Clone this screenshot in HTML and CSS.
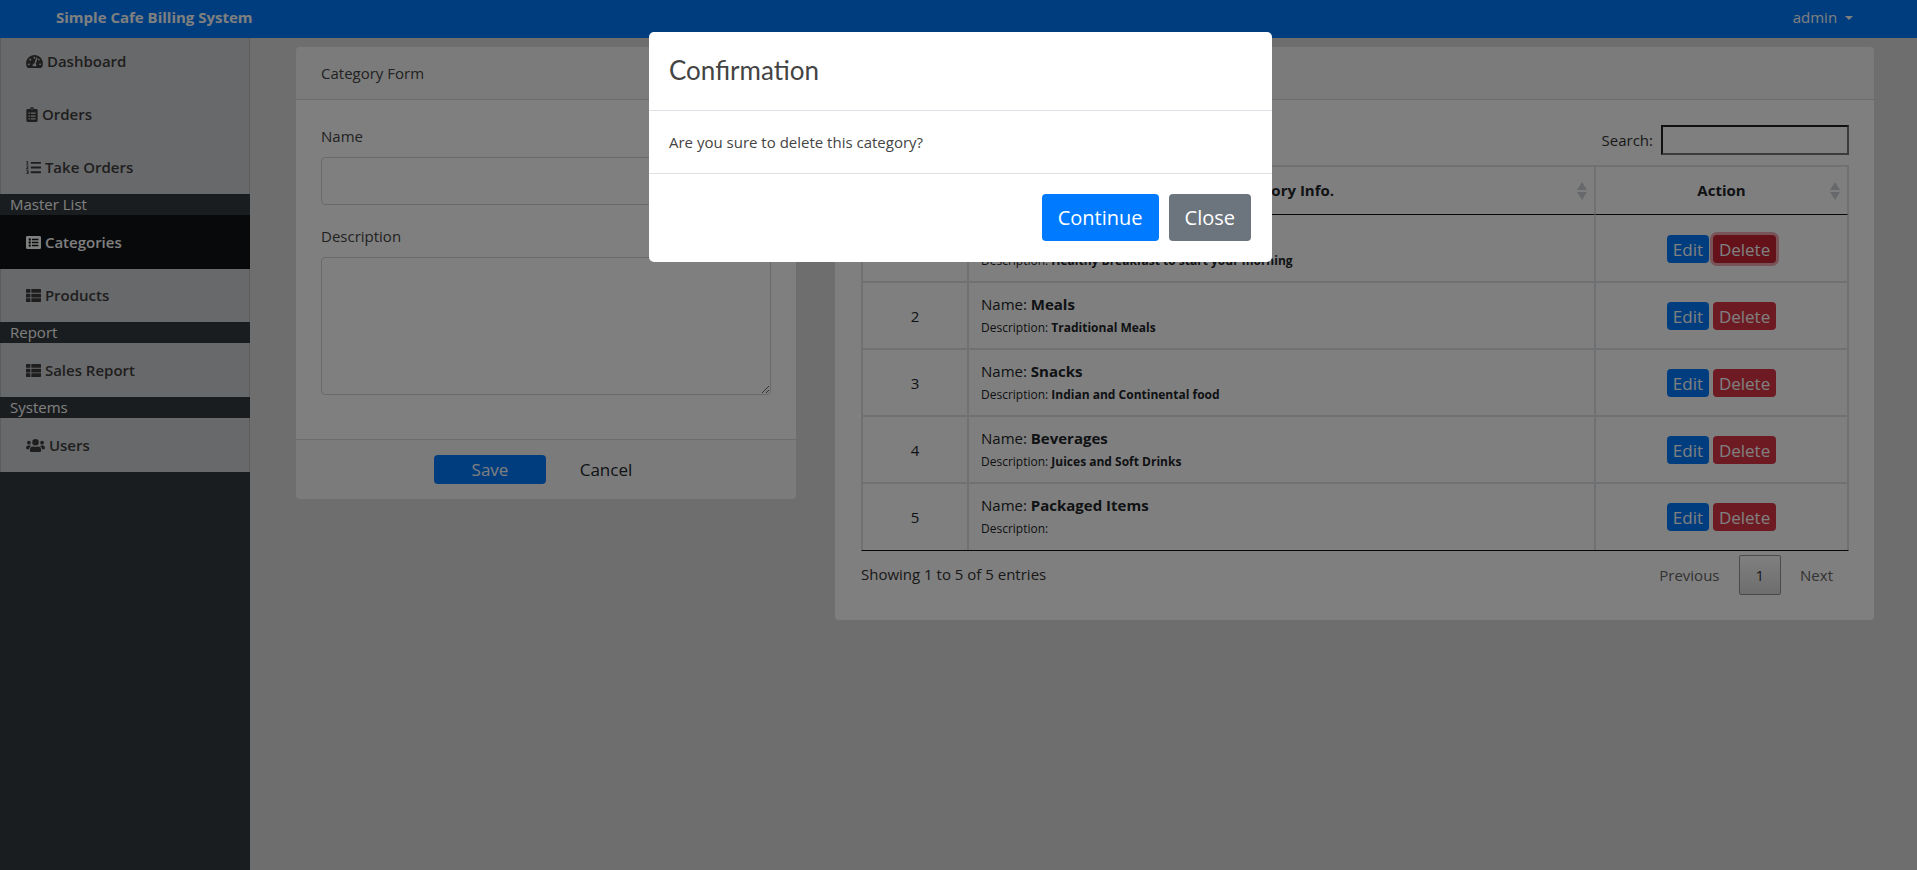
FILE: index.html
```html
<!DOCTYPE html>
<html lang="en">
<head>
<meta charset="utf-8">
<meta name="viewport" content="width=device-width, initial-scale=1">
<title>Simple Cafe Billing System</title>
<link rel="stylesheet" href="styles.css">
</head>
<body>
<header class="topbar">
  <strong class="brand">Simple Cafe Billing System</strong>
  <a class="account" href="#">admin <span class="caret"></span></a>
</header>

<div class="layout">
  <nav class="sidebar">
    <a class="nav-item" href="#"><svg class="icon" viewBox="0 0 576 512" width="17" height="15"><path d="M288 32C128.94 32 0 160.94 0 320c0 52.8 14.25 102.26 39.06 144.8 5.61 9.62 16.3 15.2 27.44 15.2h443c11.14 0 21.83-5.58 27.44-15.2C561.75 422.26 576 372.8 576 320c0-159.06-128.94-288-288-288zm0 64c14.71 0 26.58 10.13 30.32 23.65-1.11 2.26-2.64 4.23-3.45 6.67l-9.22 27.67c-5.13 3.49-10.97 6.01-17.64 6.01-17.67 0-32-14.33-32-32S270.33 96 288 96zM96 384c-17.67 0-32-14.33-32-32s14.33-32 32-32 32 14.33 32 32-14.33 32-32 32zm48-160c-17.67 0-32-14.33-32-32s14.33-32 32-32 32 14.33 32 32-14.33 32-32 32zm246.77-72.41l-61.33 184C343.13 347.33 352 364.54 352 384c0 11.72-3.38 22.55-8.88 32H232.88c-5.5-9.45-8.88-20.28-8.88-32 0-33.94 26.5-61.43 59.9-63.59l61.34-184.01c4.17-12.56 17.73-19.45 30.36-15.17 12.57 4.19 19.35 17.79 15.17 30.36zm14.66 57.2l15.52-46.55c3.47-1.29 7.13-2.23 11.05-2.23 17.67 0 32 14.33 32 32s-14.33 32-32 32c-11.38-.01-20.89-6.28-26.57-15.22zM480 384c-17.67 0-32-14.33-32-32s14.33-32 32-32 32 14.33 32 32-14.33 32-32 32z"/></svg> Dashboard</a>
    <a class="nav-item" href="#"><svg class="icon" viewBox="0 0 384 512" width="12" height="15"><path fill-rule="evenodd" d="M48 64h80a64 64 0 0 1 128 0h80a48 48 0 0 1 48 48v352a48 48 0 0 1-48 48H48a48 48 0 0 1-48-48V112a48 48 0 0 1 48-48zM72 190v44h48v-44zm80 0v44h160v-44zM72 286v44h48v-44zm80 0v44h160v-44zM72 382v44h48v-44zm80 0v44h160v-44zM192 40a24 24 0 1 0 0 48 24 24 0 0 0 0-48z"/></svg> Orders</a>
    <a class="nav-item" href="#"><svg class="icon" viewBox="0 0 512 512" width="15" height="15"><path d="M176 64h320a16 16 0 0 1 16 16v32a16 16 0 0 1-16 16H176a16 16 0 0 1-16-16V80a16 16 0 0 1 16-16zm0 160h320a16 16 0 0 1 16 16v32a16 16 0 0 1-16 16H176a16 16 0 0 1-16-16v-32a16 16 0 0 1 16-16zm0 160h320a16 16 0 0 1 16 16v32a16 16 0 0 1-16 16H176a16 16 0 0 1-16-16v-32a16 16 0 0 1 16-16zM28 32h36v96h24v24H8v-24h24V64H16V44zM8 188h72v64l-40 36h48v24H4v-32l46-44v-22H8zM8 352h80v120a8 8 0 0 1-8 8H8v-26h44v-26H24v-24h28v-26H8z"/></svg> Take Orders</a>
    <div class="nav-heading">Master List</div>
    <a class="nav-item active" href="#" aria-current="page"><svg class="icon" viewBox="0 0 512 512" width="15" height="15"><path fill-rule="evenodd" d="M48 32h416a48 48 0 0 1 48 48v352a48 48 0 0 1-48 48H48a48 48 0 0 1-48-48V80a48 48 0 0 1 48-48zM128 112a40 40 0 1 0 0 80 40 40 0 0 0 0-80zm0 104a40 40 0 1 0 0 80 40 40 0 0 0 0-80zm0 104a40 40 0 1 0 0 80 40 40 0 0 0 0-80zM204 124v56h220v-56zm0 104v56h220v-56zm0 104v56h220v-56z"/></svg> Categories</a>
    <a class="nav-item" href="#"><svg class="icon" viewBox="0 0 512 512" width="15" height="15"><path d="M24 32h126v128H0V56a24 24 0 0 1 24-24zm158 0h306a24 24 0 0 1 24 24v104H182zM0 192h150v128H0zm182 0h330v128H182zM0 352h150v128H24a24 24 0 0 1-24-24zm182 0h330v104a24 24 0 0 1-24 24H182z"/></svg> Products</a>
    <div class="nav-heading">Report</div>
    <a class="nav-item" href="#"><svg class="icon" viewBox="0 0 512 512" width="15" height="15"><path d="M24 32h126v128H0V56a24 24 0 0 1 24-24zm158 0h306a24 24 0 0 1 24 24v104H182zM0 192h150v128H0zm182 0h330v128H182zM0 352h150v128H24a24 24 0 0 1-24-24zm182 0h330v104a24 24 0 0 1-24 24H182z"/></svg> Sales Report</a>
    <div class="nav-heading">Systems</div>
    <a class="nav-item" href="#"><svg class="icon" viewBox="0 0 640 512" width="19" height="15"><path d="M96 224a64 64 0 1 0 0-128 64 64 0 0 0 0 128zm448 0a64 64 0 1 0 0-128 64 64 0 0 0 0 128zm32 32h-64c-17.600 0-33.500 7.100-45.100 18.600 40.300 22.100 68.900 62 75.100 109.400h66a32 32 0 0 0 32-32v-32a64 64 0 0 0-64-64zm-256 0a112 112 0 1 0 0-224 112 112 0 0 0 0 224zm76.800 32h-8.300a155 155 0 0 1-137 0h-8.300A115 115 0 0 0 128 403.200V432a48 48 0 0 0 48 48h288a48 48 0 0 0 48-48v-28.800A115 115 0 0 0 396.800 288zm-223.700-13.400A64 64 0 0 0 128 256H64a64 64 0 0 0-64 64v32a32 32 0 0 0 32 32h65.900c6.300-47.400 34.900-87.300 75.200-109.400z"/></svg> Users</a>
  </nav>

  <main class="content">
    <form class="card">
      <div class="card-header">Category Form</div>
      <div class="form-body">
        <div class="field">
          <label for="name">Name</label>
          <input class="control" id="name" type="text">
        </div>
        <div class="field">
          <label for="description">Description</label>
          <textarea class="control area" id="description"></textarea>
        </div>
      </div>
      <div class="card-footer">
        <button class="btn btn-sm btn-primary save" type="button">Save</button>
        <button class="btn btn-sm cancel" type="button">Cancel</button>
      </div>
    </form>

    <section class="card">
      <div class="card-header">Category List</div>
      <div class="list-body">
        <div class="search"><label for="search">Search:</label><input class="search-input" id="search" type="search"></div>
        <table class="data">
          <colgroup><col class="col-num"><col><col class="col-action"></colgroup>
          <thead>
            <tr>
              <th>#<svg class="sort" viewBox="0 0 10 18" width="10" height="18"><path d="M5 0l5 8H0zM0 10h10l-5 8z"/></svg></th>
              <th>Category Info.<svg class="sort" viewBox="0 0 10 18" width="10" height="18"><path d="M5 0l5 8H0zM0 10h10l-5 8z"/></svg></th>
              <th>Action<svg class="sort" viewBox="0 0 10 18" width="10" height="18"><path d="M5 0l5 8H0zM0 10h10l-5 8z"/></svg></th>
            </tr>
          </thead>
          <tbody>
            <tr>
              <td class="center">1</td>
              <td><p>Name: <b>Breakfast</b></p><p class="small">Description: <b>Healthy Breakfast to start your morning</b></p></td>
              <td class="center"><button class="btn btn-row btn-primary" type="button">Edit</button> <button class="btn btn-row btn-danger pressed" type="button">Delete</button></td>
            </tr>
            <tr>
              <td class="center">2</td>
              <td><p>Name: <b>Meals</b></p><p class="small">Description: <b>Traditional Meals</b></p></td>
              <td class="center"><button class="btn btn-row btn-primary" type="button">Edit</button> <button class="btn btn-row btn-danger" type="button">Delete</button></td>
            </tr>
            <tr>
              <td class="center">3</td>
              <td><p>Name: <b>Snacks</b></p><p class="small">Description: <b>Indian and Continental food</b></p></td>
              <td class="center"><button class="btn btn-row btn-primary" type="button">Edit</button> <button class="btn btn-row btn-danger" type="button">Delete</button></td>
            </tr>
            <tr>
              <td class="center">4</td>
              <td><p>Name: <b>Beverages</b></p><p class="small">Description: <b>Juices and Soft Drinks</b></p></td>
              <td class="center"><button class="btn btn-row btn-primary" type="button">Edit</button> <button class="btn btn-row btn-danger" type="button">Delete</button></td>
            </tr>
            <tr>
              <td class="center">5</td>
              <td><p>Name: <b>Packaged Items</b></p><p class="small">Description:</p></td>
              <td class="center"><button class="btn btn-row btn-primary" type="button">Edit</button> <button class="btn btn-row btn-danger" type="button">Delete</button></td>
            </tr>
          </tbody>
        </table>
        <div class="table-footer">
          <span class="info">Showing 1 to 5 of 5 entries</span>
          <div class="pager">
            <a class="page" href="#">Previous</a>
            <a class="page current" href="#">1</a>
            <a class="page" href="#">Next</a>
          </div>
        </div>
      </div>
    </section>
  </main>
</div>

<div class="backdrop">
  <div class="modal" role="dialog" aria-modal="true" aria-labelledby="confirm-title">
    <h5 class="modal-title" id="confirm-title">Confirmation</h5>
    <div class="modal-body">Are you sure to delete this category?</div>
    <div class="modal-footer">
      <button class="btn btn-lg btn-primary" type="button">Continue</button>
      <button class="btn btn-lg btn-secondary" type="button">Close</button>
    </div>
  </div>
</div>
</body>
</html>
```
FILE: styles.css
```css
* {
  box-sizing: border-box;
}

body {
  margin: 0;
  background: #dcdcdc;
  color: #444;
  font: 15px/24px "Open Sans", "Noto Sans", sans-serif;
}

p {
  margin: 0;
}

a {
  color: inherit;
  text-decoration: none;
}

button,
input,
textarea {
  font-family: inherit;
}

.topbar {
  position: fixed;
  z-index: 1;
  top: 0;
  left: 0;
  right: 0;
  display: flex;
  justify-content: space-between;
  height: 38px;
  padding: 5px 64px 0 56px;
  background: #007bff;
  color: #fff;
}

.caret {
  display: inline-block;
  margin-left: 4px;
  vertical-align: 3px;
  border: 4px solid transparent;
  border-top-color: currentColor;
  border-bottom: 0;
}

.layout {
  display: flex;
  min-height: 100vh;
}

.sidebar {
  flex: 0 0 250px;
  padding-top: 35px;
  background: #343a40;
}

.nav-item {
  display: block;
  height: 54px;
  padding: 15px 25px;
  border: solid rgba(0, 0, 0, 0.125);
  border-width: 0 1px;
  background: #d0d3d6;
  color: #3f3c3d;
  font-weight: 600;
}

.nav-item:first-child,
.nav-item + .nav-item {
  height: 53px;
  padding-top: 14px;
}

.nav-item.active {
  border-color: #0f1215;
  background: #0f1215;
  color: #fff;
}

.icon {
  vertical-align: -2px;
  fill: currentColor;
}

.nav-heading {
  height: 21px;
  padding-left: 10px;
  color: #fff;
  line-height: 20px;
}

.content {
  flex: 1;
  display: grid;
  grid-template-columns: 500fr 1039fr;
  align-items: start;
  gap: 39px;
  padding: 47px 43px 0 46px;
}

.card {
  border-radius: 4px;
  background: #fff;
  overflow: hidden;
}

.card-header {
  padding: 14px 25px;
  border-bottom: 1px solid rgba(0, 0, 0, 0.125);
  background: rgba(0, 0, 0, 0.03);
}

.form-body {
  padding: 24px 25px 44px;
  display: grid;
  gap: 19px;
}

.field {
  display: grid;
  gap: 9px;
}

.control {
  width: 100%;
  height: 48px;
  border: 1px solid #ced4da;
  border-radius: 4px;
  background: #fff;
}

.area {
  height: 138px;
  resize: vertical;
}

.card-footer {
  display: flex;
  justify-content: center;
  gap: 24px;
  padding: 15px 31px 15px 15px;
  border-top: 1px solid rgba(0, 0, 0, 0.125);
  background: rgba(0, 0, 0, 0.03);
}

.btn {
  border: 0;
  border-radius: 4px;
  background: transparent;
  color: #212529;
}

.btn-sm {
  height: 29px;
  font-size: 17px;
}

.save {
  width: 112px;
}

.cancel {
  width: 72px;
}

.btn-row {
  height: 28px;
  padding: 0 6px;
  font-size: 17px;
}

.btn-lg {
  height: 47px;
  padding: 0 16px;
  font-size: 20px;
}

.btn-primary {
  background: #007bff;
  color: #fff;
}

.btn-danger {
  background: #dc3545;
  color: #fff;
}

.btn-danger.pressed {
  background: #c82333;
  box-shadow: 0 0 0 3px rgba(225, 83, 97, 0.5);
}

.btn-secondary {
  background: #6c757d;
  color: #fff;
}

.list-body {
  padding: 25px 25px 25px 26px;
}

.search {
  display: flex;
  justify-content: flex-end;
  align-items: center;
  gap: 8px;
  margin-bottom: 10px;
  color: #333;
}

.search-input {
  width: 188px;
  height: 30px;
  border: 2px inset #767676;
  background: #fff;
}

.data {
  width: 100%;
  table-layout: fixed;
  border: 1px solid #dee2e6;
  border-bottom-color: #111;
  border-collapse: separate;
  border-spacing: 0;
  color: #212529;
}

.col-num {
  width: 106px;
}

.col-action {
  width: 253px;
}

.data th,
.data td {
  border: 1px solid #dee2e6;
}

.data th {
  position: relative;
  padding: 11px 12px 12px;
  border-bottom-color: #111;
  font-weight: 700;
}

.data td {
  padding: 9px 12px 8px;
}

.data tbody tr:first-child td {
  padding-top: 10px;
  border-top: 0;
}

.data tbody tr:last-child td {
  padding-bottom: 9px;
  border-bottom: 0;
}

.data .center {
  text-align: center;
}

.small {
  font-size: 12px;
}

/* sort arrows sit over the right end of each heading cell */
.sort {
  position: absolute;
  top: 15px;
  right: 7px;
  fill: #cfd1d6;
}

.table-footer {
  display: flex;
  justify-content: space-between;
  padding-top: 4px;
  color: #333;
}

.info {
  line-height: 38px;
}

.pager {
  display: flex;
  gap: 3px;
  color: #666;
}

.page {
  height: 40px;
  padding: 0 15px;
  line-height: 38px;
  border: 1px solid transparent;
  border-radius: 2px;
}

.page.current {
  padding: 0 16px;
  border-color: #979797;
  background: linear-gradient(#fff, #dcdcdc);
  color: #333;
}

.backdrop {
  position: fixed;
  z-index: 2;
  inset: 0;
  padding: 32px 0 0 4px;
  background: rgba(0, 0, 0, 0.5);
}

.modal {
  width: 623px;
  max-width: 95%;
  margin: 0 auto;
  border-radius: 5px;
  background: #fff;
}

.modal-title {
  margin: 0;
  padding: 20px 20px 22px;
  border-bottom: 1px solid #dee2e6;
  font: 400 26px/36px Lato, "Open Sans", sans-serif;
}

.modal-body {
  padding: 19px 20px;
}

.modal-footer {
  display: flex;
  justify-content: flex-end;
  gap: 10px;
  padding: 20px 21px 21px;
  border-top: 1px solid #dee2e6;
}
```
